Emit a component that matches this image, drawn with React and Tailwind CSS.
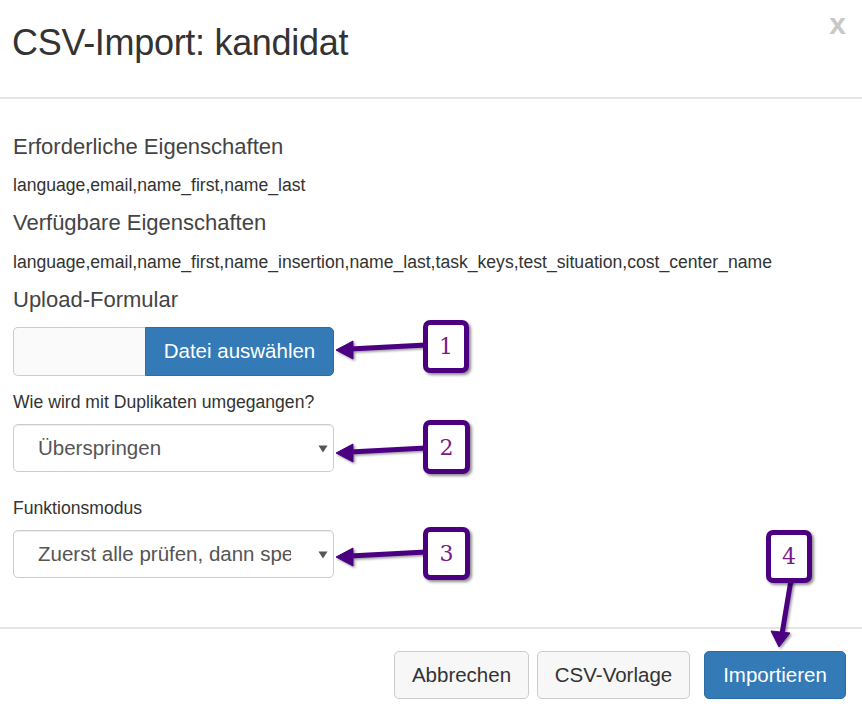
import React from "react";

const Callout = ({ n, className }) => (
  <div
    className={`absolute flex items-center justify-center rounded-[7px] border-[5px] border-[#4b0082] bg-white text-[#7a1a8a] text-[22px] shadow-[2px_2px_3px_rgba(0,0,0,0.45)] ${className}`}
    style={{ fontFamily: '"DejaVu Serif", "Liberation Serif", serif' }}
  >
    {n}
  </div>
);

const Select = ({ text }) => (
  <div className="relative flex h-[48px] w-[321px] items-center rounded-[5px] border border-[#cccccc] bg-white pl-[24px] shadow-[inset_0_1px_1px_rgba(0,0,0,0.075)]">
    <span className="block w-[253px] overflow-hidden whitespace-nowrap text-[20.5px] text-[#555555]">{text}</span>
    <svg className="absolute left-[304px] top-[20px]" width="10" height="8" viewBox="0 0 10 8">
      <path d="M0.5 0.5 L9.5 0.5 L5 7.5 Z" fill="#555555" />
    </svg>
  </div>
);

export default function App() {
  return (
    <div
      className="relative h-[718px] w-[862px] overflow-hidden bg-white text-[#333333]"
      style={{ fontFamily: '"Liberation Sans", Arial, sans-serif' }}
    >
      {/* Header */}
      <div className="relative h-[99px] border-b-2 border-[#e5e5e5] pl-[12px] pt-[22px]">
        <h3 className="text-[36px] leading-[42px] tracking-[-0.3px] text-[#333333]">CSV-Import: kandidat</h3>
        <span className="absolute right-[16px] top-[6px] text-[30px] font-bold leading-[36px] text-[#c8c8c8]">x</span>
      </div>

      {/* Body */}
      <div className="flex flex-col items-start pl-[13px] pt-[35px]">
        <h4 className="text-[22px] leading-[26px] text-[#444444]">Erforderliche Eigenschaften</h4>
        <p className="mt-[13px] text-[17.6px] leading-[24px]">language,email,name_first,name_last</p>
        <h4 className="mt-[13px] text-[22px] leading-[26px] text-[#444444]">Verfügbare Eigenschaften</h4>
        <p className="mt-[14px] text-[17.6px] leading-[24px]">
          language,email,name_first,name_insertion,name_last,task_keys,test_situation,cost_center_name
        </p>
        <h4 className="mt-[13px] text-[22px] leading-[26px] text-[#444444]">Upload-Formular</h4>

        <div className="mt-[14px] flex h-[49px] w-[321px]">
          <div className="h-full w-[132px] rounded-l-[5px] border border-r-0 border-[#cccccc] bg-[#fafafa]" />
          <div className="flex h-full flex-1 items-center justify-center rounded-r-[5px] border border-[#2e6da4] bg-[#337ab7] text-[20.5px] text-white">
            Datei auswählen
          </div>
        </div>

        <label className="mt-[14px] text-[17.6px] leading-[24px]">Wie wird mit Duplikaten umgegangen?</label>
        <div className="mt-[10px]">
          <Select text="Überspringen" />
        </div>

        <label className="mt-[24px] text-[17.6px] leading-[24px]">Funktionsmodus</label>
        <div className="mt-[10px]">
          <Select text="Zuerst alle prüfen, dann speichern" />
        </div>
      </div>

      {/* Footer */}
      <div className="absolute left-0 right-0 top-[627px] flex justify-end gap-[8px] border-t-2 border-[#e5e5e5] pr-[16px] pt-[22px]">
        <button className="h-[48px] w-[135px] rounded-[5px] border border-[#cccccc] bg-[#f7f7f7] text-[20.5px] text-[#333333]">
          Abbrechen
        </button>
        <button className="h-[48px] w-[153px] rounded-[5px] border border-[#cccccc] bg-[#f7f7f7] text-[20.5px] text-[#333333]">
          CSV-Vorlage
        </button>
        <button className="ml-[6px] h-[48px] w-[142px] rounded-[5px] border border-[#2e6da4] bg-[#337ab7] text-[20.5px] text-white">
          Importieren
        </button>
      </div>

      {/* Annotation arrows */}
      <svg className="pointer-events-none absolute left-0 top-0" width="862" height="718">
        <defs>
          <filter id="sh" x="-20%" y="-20%" width="140%" height="140%">
            <feDropShadow dx="1.5" dy="1.5" stdDeviation="1" floodColor="#000" floodOpacity="0.4" />
          </filter>
        </defs>
        <g fill="#4b0082" stroke="#4b0082" filter="url(#sh)">
          <path d="M350 349 L426 345" strokeWidth="5" fill="none" />
          <path d="M336 350 L353 341 L353 359 Z" strokeWidth="1" />
          <path d="M350 452 L426 448" strokeWidth="5" fill="none" />
          <path d="M336 453 L353 444 L353 462 Z" strokeWidth="1" />
          <path d="M350 556 L426 552" strokeWidth="5" fill="none" />
          <path d="M336 557 L353 548 L353 566 Z" strokeWidth="1" />
          <path d="M791 580 L782 634" strokeWidth="5" fill="none" />
          <path d="M779 647 L771 631 L790 633 Z" strokeWidth="1" />
        </g>
      </svg>

      <Callout n="1" className="left-[423px] top-[320px] h-[53px] w-[46px]" />
      <Callout n="2" className="left-[423px] top-[420px] h-[54px] w-[47px]" />
      <Callout n="3" className="left-[423px] top-[527px] h-[53px] w-[47px]" />
      <Callout n="4" className="left-[766px] top-[530px] h-[53px] w-[46px]" />
    </div>
  );
}
